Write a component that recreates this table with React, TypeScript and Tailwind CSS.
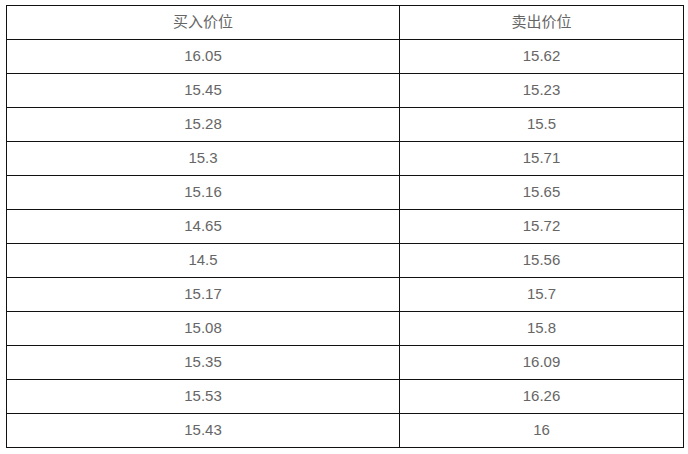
const rows: [string, string][] = [
  ['16.05', '15.62'],
  ['15.45', '15.23'],
  ['15.28', '15.5'],
  ['15.3', '15.71'],
  ['15.16', '15.65'],
  ['14.65', '15.72'],
  ['14.5', '15.56'],
  ['15.17', '15.7'],
  ['15.08', '15.8'],
  ['15.35', '16.09'],
  ['15.53', '16.26'],
  ['15.43', '16'],
];

export default function App() {
  return (
    <div className="h-[454px] w-[688px] bg-white pl-[6px] pt-[5px]">
      <table
        className="w-[678px] table-fixed border-collapse text-center text-[15px] text-[#666]"
        style={{ fontFamily: '"Liberation Sans", "Noto Sans CJK SC", sans-serif' }}
      >
        <colgroup>
          <col className="w-[393px]" />
          <col />
        </colgroup>
        <thead>
          <tr className="h-[34px]">
            <th className="border border-[#111] font-normal">买入价位</th>
            <th className="border border-[#111] font-normal">卖出价位</th>
          </tr>
        </thead>
        <tbody>
          {rows.map(([buy, sell], i) => (
            <tr key={i} className="h-[34px]">
              <td className="border border-[#111]">{buy}</td>
              <td className="border border-[#111]">{sell}</td>
            </tr>
          ))}
        </tbody>
      </table>
    </div>
  );
}
